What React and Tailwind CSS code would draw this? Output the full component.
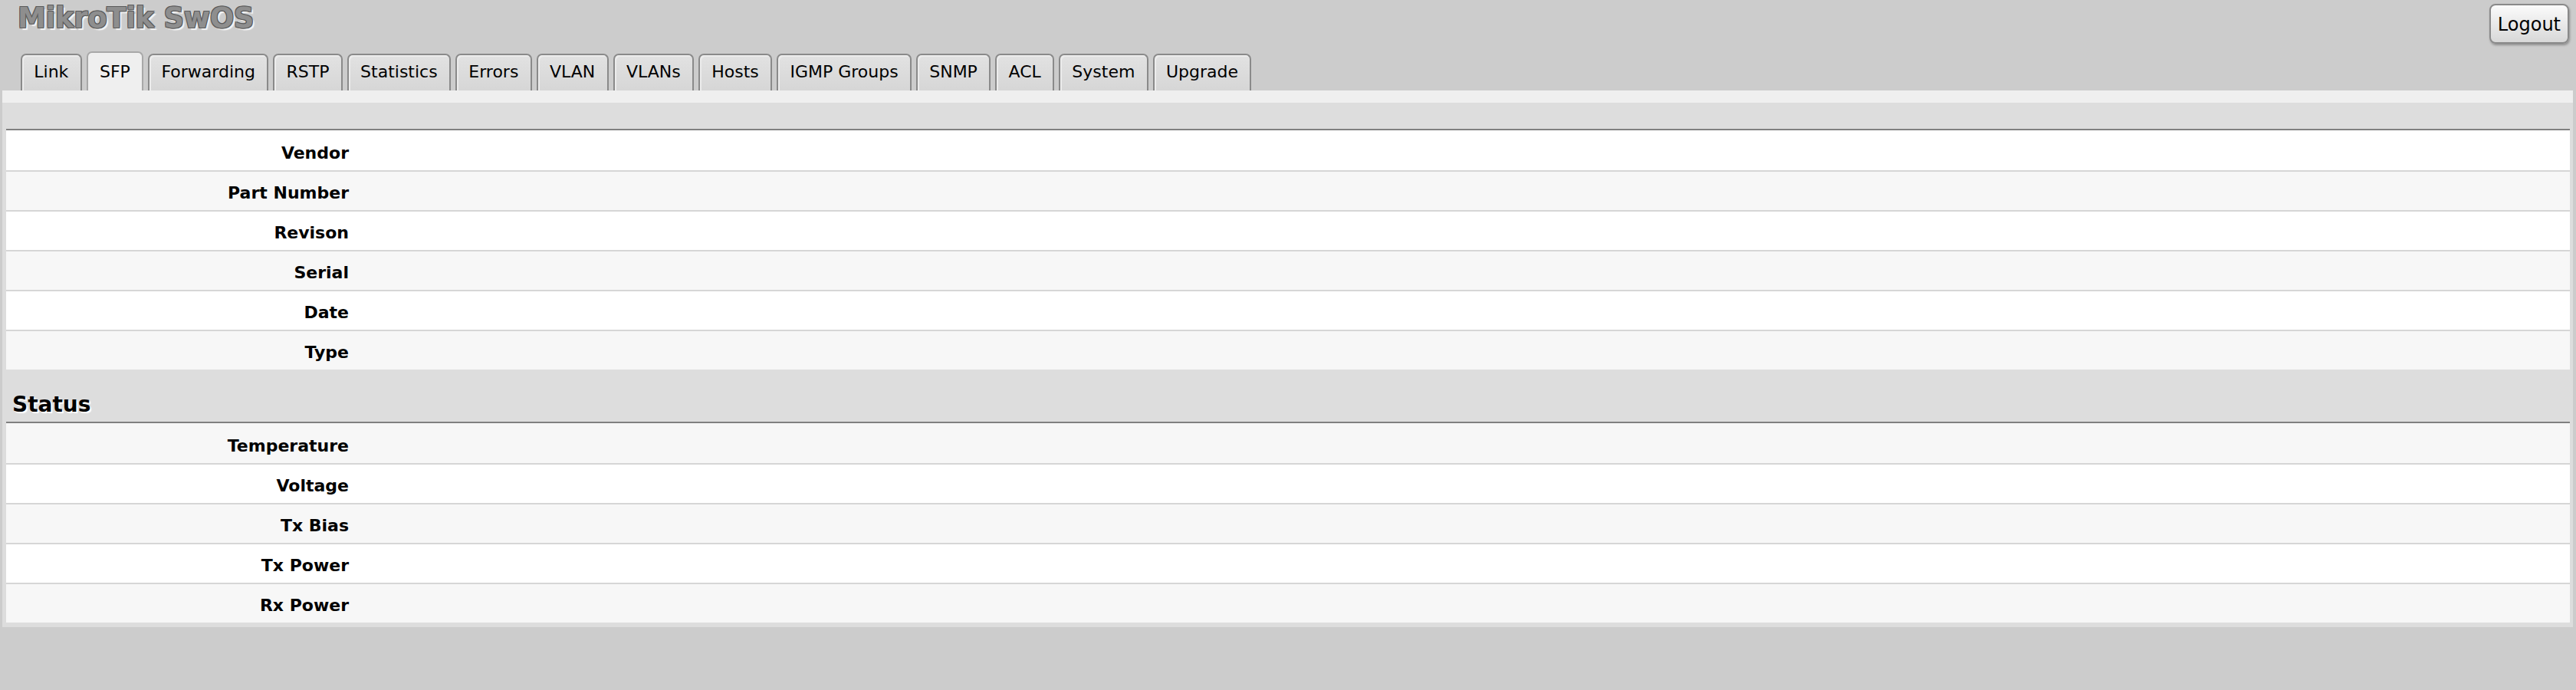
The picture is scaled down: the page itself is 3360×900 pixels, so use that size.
import React from "react";

const TABS = ["Link", "SFP", "Forwarding", "RSTP", "Statistics", "Errors", "VLAN", "VLANs", "Hosts", "IGMP Groups", "SNMP", "ACL", "System", "Upgrade"];
const INFO = ["Vendor", "Part Number", "Revison", "Serial", "Date", "Type"];
const STATUS = ["Temperature", "Voltage", "Tx Bias", "Tx Power", "Rx Power"];

function Tab({ label, active }) {
  if (active) {
    return (
      <div className="px-[15.3px] pt-[12px] pb-[11px] leading-[26px] rounded-t-[7px] border-2 border-b-0 border-[#a8a8a8] bg-[#efefef] text-black">
        {label}
      </div>
    );
  }
  return (
    <div className="px-[15.3px] pt-[9px] pb-[11px] leading-[26px] rounded-t-[7px] border-2 border-b-0 border-[#8a8a8a] bg-gradient-to-b from-[#e2e2e2] to-[#d6d6d6] shadow-[inset_2px_2px_0_#ececec] text-black">
      {label}
    </div>
  );
}

function Row({ label, gray, first }) {
  let cls = "flex h-[52px] border-t-2 ";
  if (gray) cls += first ? "bg-[#f7f7f7] border-[#f7f7f7]" : "bg-[#f7f7f7] border-[#d6d6d6]";
  else cls += first ? "bg-white border-white" : "bg-white border-[#d6d6d6]";
  return (
    <div className={cls}>
      <div className="w-[447px] text-right pt-[15px] text-[22px] leading-[26px] font-bold">{label}</div>
      <div className="flex-1" />
    </div>
  );
}

export default function App() {
  return (
    <div className="min-h-screen bg-[#cccccc] font-['DejaVu_Sans',sans-serif] text-black pb-[80px]">
      <div className="flex justify-between items-start pt-[5px] pl-[23px] pr-[9px]">
        <div className="text-[37px] leading-[38px] font-bold tracking-[-0.3px] text-[#8e8e8e] [text-shadow:-1px_-1px_0_#5a5a5a,1px_-1px_0_#5a5a5a,-1px_1px_0_#5a5a5a,1px_1px_0_#5a5a5a,3px_3px_1px_#f4f4f4]">
          MikroTik SwOS
        </div>
        <button className="px-[9px] pt-[11px] pb-[9px] text-[24px] leading-[28px] rounded-[8px] border-2 border-[#8a8a8a] bg-gradient-to-b from-[#fbfbfb] to-[#d8d8d8] shadow-[1px_2px_3px_rgba(0,0,0,0.3)] text-black">
          Logout
        </button>
      </div>

      <div className="flex items-end gap-[6px] pl-[27px] mt-[10px] text-[22px]">
        {TABS.map((t) => (
          <Tab key={t} label={t} active={t === "SFP"} />
        ))}
      </div>

      <div className="ml-[3px] mr-[4px] bg-[#dddddd]">
        <div className="h-[16px] bg-[#efefef]" />
        <div className="pl-[5px] pr-[4px] pb-[6px]">
          <div className="h-[36px] border-b-2 border-[#808080]" />
          {INFO.map((l, i) => (
            <Row key={l} label={l} gray={i % 2 === 1} first={i === 0} />
          ))}
          <div className="px-[8px] pt-[30px] pb-[6px] border-b-2 border-[#808080] text-[28px] leading-[32px] font-bold [text-shadow:1px_1px_1px_#ffffff,2px_2px_1px_#ffffff]">
            Status
          </div>
          {STATUS.map((l, i) => (
            <Row key={l} label={l} gray={i % 2 === 0} first={i === 0} />
          ))}
        </div>
      </div>
    </div>
  );
}
